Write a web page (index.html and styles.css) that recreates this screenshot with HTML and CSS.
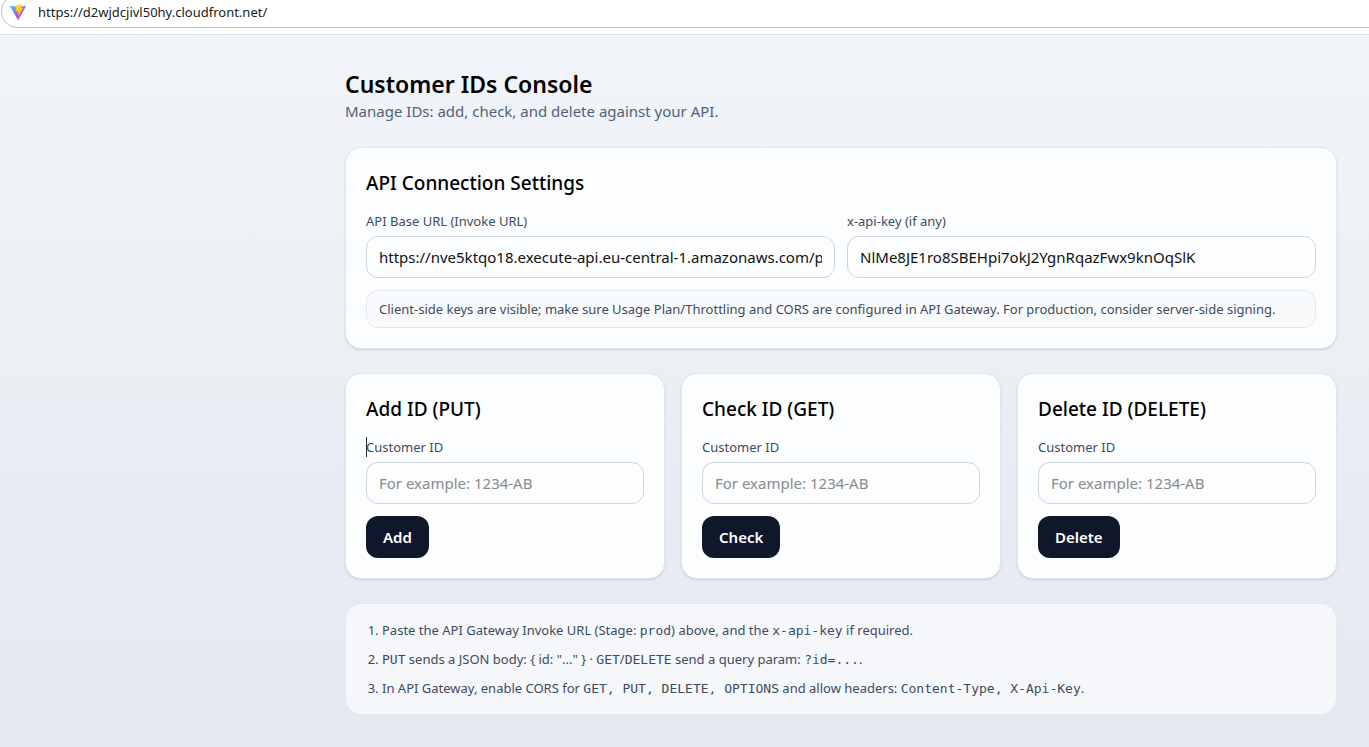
FILE: index.html
```html
<!DOCTYPE html>
<html lang="en">
<head>
<meta charset="utf-8">
<meta name="viewport" content="width=device-width, initial-scale=1">
<title>Customer IDs Console</title>
<link rel="stylesheet" href="styles.css">
</head>
<body>
<div class="browser-bar">
  <div class="address">
    <svg class="favicon" viewBox="0 0 32 32" aria-hidden="true">
      <defs>
        <linearGradient id="shield" x1="0" y1="0" x2="0.6" y2="1">
          <stop offset="0" stop-color="#41d1ff"/>
          <stop offset="0.7" stop-color="#a34bfb"/>
          <stop offset="1" stop-color="#bd34fe"/>
        </linearGradient>
        <linearGradient id="bolt" x1="0.4" y1="0" x2="0.6" y2="1">
          <stop offset="0" stop-color="#ffea83"/>
          <stop offset="0.1" stop-color="#ffdd35"/>
          <stop offset="1" stop-color="#ffa800"/>
        </linearGradient>
      </defs>
      <path fill="url(#shield)" d="M31.8 5 17 31c-.4.6-1.200.6-1.600 0L.2 5c-.4-.7.200-1.600 1.100-1.400L16.200 6.200h.4l14.100-2.600c.9-.2 1.500.7 1.100 1.400Z"/>
      <path fill="url(#bolt)" d="M23.200 0 12.300 2.200c-.2 0-.3.200-.3.400l-.7 11.300c0 .3.300.5.500.4l3-.7c.3-.1.6.2.5.5l-.9 4.400c-.1.3.2.6.5.5l1.900-.6c.3-.1.600.2.5.5l-1.400 6.900c-.1.400.5.700.7.300l.2-.2 8.900-17.800c.1-.3-.1-.6-.5-.6l-3.100.6c-.3.100-.6-.2-.5-.5l2-7.100c.1-.3-.1-.6-.4-.5Z"/>
    </svg>
    <span class="address-text">https://d2wjdcjivl50hy.cloudfront.net/</span>
  </div>
</div>
<main class="page">
  <header class="page-header">
    <h1 class="page-title">Customer IDs Console</h1>
    <p class="page-subtitle">Manage IDs: add, check, and delete against your API.</p>
  </header>

  <section class="card">
    <h2 class="card-title">API Connection Settings</h2>
    <div class="settings">
      <div class="field">
        <label class="label" for="base-url">API Base URL (Invoke URL)</label>
        <input class="input" id="base-url" type="text" value="https://nve5ktqo18.execute-api.eu-central-1.amazonaws.com/prod">
      </div>
      <div class="field">
        <label class="label" for="api-key">x-api-key (if any)</label>
        <input class="input" id="api-key" type="text" value="NlMe8JE1ro8SBEHpi7okJ2YgnRqazFwx9knOqSlK">
      </div>
    </div>
    <p class="hint">Client-side keys are visible; make sure Usage Plan/Throttling and CORS are configured in API Gateway. For production, consider server-side signing.</p>
  </section>

  <div class="actions">
    <form class="card">
      <h2 class="card-title">Add ID (PUT)</h2>
      <div class="field">
        <label class="label label-caret" for="add-id">Customer ID</label>
        <input class="input" id="add-id" type="text" placeholder="For example: 1234-AB">
      </div>
      <button class="button" type="button">Add</button>
    </form>
    <form class="card">
      <h2 class="card-title">Check ID (GET)</h2>
      <div class="field">
        <label class="label" for="check-id">Customer ID</label>
        <input class="input" id="check-id" type="text" placeholder="For example: 1234-AB">
      </div>
      <button class="button" type="button">Check</button>
    </form>
    <form class="card">
      <h2 class="card-title">Delete ID (DELETE)</h2>
      <div class="field">
        <label class="label" for="delete-id">Customer ID</label>
        <input class="input" id="delete-id" type="text" placeholder="For example: 1234-AB">
      </div>
      <button class="button" type="button">Delete</button>
    </form>
  </div>

  <section class="notes">
    <ol class="notes-list">
      <li>Paste the API Gateway Invoke URL (Stage: <code>prod</code>) above, and the <code>x-api-key</code> if required.</li>
      <li><code>PUT</code> sends a JSON body: { id: "..." } · <code>GET</code>/<code>DELETE</code> send a query param: <code>?id=...</code>.</li>
      <li>In API Gateway, enable CORS for <code>GET, PUT, DELETE, OPTIONS</code> and allow headers: <code>Content-Type, X-Api-Key</code>.</li>
    </ol>
  </section>
</main>
</body>
</html>
```
FILE: styles.css
```css
*, *::before, *::after { box-sizing: border-box; }

body {
  margin: 0;
  min-height: 100vh;
  display: flex;
  flex-direction: column;
  font-family: "Noto Sans", "Open Sans", sans-serif;
  font-size: 15px;
  line-height: 24px;
  color: #000;
  background: #fff;
}

h1, h2, p, ol { margin: 0; }

.browser-bar {
  height: 35px;
  overflow: hidden;
  background: #fff;
  border-bottom: 1px solid #dfe0dc;
}

.address {
  display: flex;
  align-items: center;
  gap: 12px;
  height: 33px;
  margin: -5px -20px 0 1px;
  padding-left: 8px;
  border: 1px solid #bdc1c6;
  border-radius: 16px;
}

.favicon { width: 16px; height: 16px; }

.address-text { font-size: 13px; line-height: 20px; color: #202124; }

.page {
  flex: 1;
  display: flex;
  flex-direction: column;
  gap: 24px;
  padding: 32px 32px 32px max(32px, calc(100% - 1024px));
  background: linear-gradient(#f1f5f9, #eaeff4 50%, #e8ecf4 60%, #e4e9f1);
}

.page-title { font-size: 23px; line-height: 34px; font-weight: 600; }
.page-subtitle { margin-bottom: 2px; line-height: 20px; color: #526177; }

.card {
  padding: 20px;
  background: #fcfdff;
  border: 1px solid #e2e8f0;
  border-radius: 16px;
  box-shadow: 0 1px 2px rgba(15, 23, 42, 0.14);
}

.card-title {
  margin-bottom: 13px;
  font-size: 19px;
  line-height: 30px;
  font-weight: 500;
}

.settings { display: grid; grid-template-columns: repeat(2, 1fr); gap: 12px; }
.actions { display: grid; grid-template-columns: repeat(3, 1fr); gap: 16px; }

.field { display: flex; flex-direction: column; gap: 5px; min-width: 0; }

.label { position: relative; font-size: 13px; line-height: 20px; color: #3d4b60; }

.label-caret::before {
  content: "";
  position: absolute;
  left: 0;
  top: 0;
  width: 1px;
  height: 20px;
  background: #1e293b;
}

.input {
  width: 100%;
  height: 42px;
  padding: 0 12px;
  font: inherit;
  color: #111;
  background: #fcfdff;
  border: 1px solid #cbd5e1;
  border-radius: 12px;
}

.input::placeholder { color: #8a8a8a; opacity: 1; }

.hint {
  margin-top: 12px;
  padding: 8px 12px;
  font-size: 13px;
  line-height: 20px;
  color: #3d4b60;
  background: #f9fafc;
  border: 1px solid #e2e8f0;
  border-radius: 12px;
}

.button {
  height: 42px;
  margin-top: 12px;
  padding: 0 17px;
  font: inherit;
  font-weight: 600;
  color: #fff;
  background: #0f172a;
  border: 0;
  border-radius: 12px;
}

.notes {
  padding: 16px 20px;
  font-size: 13px;
  line-height: 20px;
  color: #3d4b60;
  background: #f5f7fb;
  border: 1px solid #e2e8f0;
  border-radius: 16px;
}

.notes-list { display: flex; flex-direction: column; gap: 9px; padding-left: 16px; }

code { font-family: "DejaVu Sans Mono", monospace; font-size: 13px; line-height: 1; }
```
